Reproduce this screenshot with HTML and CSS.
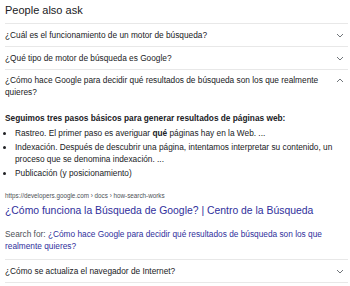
FILE: index.html
```html
<!DOCTYPE html>
<html lang="es">
<head>
<meta charset="utf-8">
<link rel="stylesheet" href="styles.css">
</head>
<body>
<div class="paa">
  <div class="title">People also ask</div>
  <div class="q">
    <span>¿Cuál es el funcionamiento de un motor de búsqueda?</span>
    <svg class="chev" viewBox="0 0 8 5" width="8" height="5"><path d="M1 1 L4 4 L7 1" fill="none" stroke="#70757a" stroke-width="1"/></svg>
  </div>
  <div class="q">
    <span>¿Qué tipo de motor de búsqueda es Google?</span>
    <svg class="chev" viewBox="0 0 8 5" width="8" height="5"><path d="M1 1 L4 4 L7 1" fill="none" stroke="#70757a" stroke-width="1"/></svg>
  </div>
  <div class="q open">
    <span>¿Cómo hace Google para decidir qué resultados de búsqueda son los que realmente quieres?</span>
    <svg class="chev up" viewBox="0 0 8 5" width="8" height="5"><path d="M1 4 L4 1 L7 4" fill="none" stroke="#70757a" stroke-width="1"/></svg>
  </div>
  <div class="answer">
    <div class="lead">Seguimos tres pasos básicos para generar resultados de páginas web:</div>
    <ul class="steps">
      <li>Rastreo. El primer paso es averiguar <b>qué</b> páginas hay en la Web. ...</li>
      <li>Indexación. Después de descubrir una página, intentamos interpretar su contenido, un proceso que se denomina indexación. ...</li>
      <li>Publicación (y posicionamiento)</li>
    </ul>
    <div class="url">https://developers.google.com › docs › how-search-works</div>
    <div class="link">¿Cómo funciona la Búsqueda de Google? | Centro de la Búsqueda</div>
    <div class="search">
      <div class="sline"><span class="slabel">Search for:</span> <a class="qlink">¿Cómo hace Google para decidir qué resultados de búsqueda son los que</a></div>
      <div class="sline"><a class="qlink">realmente quieres?</a></div>
    </div>
  </div>
  <div class="q">
    <span>¿Cómo se actualiza el navegador de Internet?</span>
    <svg class="chev" viewBox="0 0 8 5" width="8" height="5"><path d="M1 1 L4 4 L7 1" fill="none" stroke="#70757a" stroke-width="1"/></svg>
  </div>
  <div class="end"></div>
</div>
</body>
</html>
```
FILE: styles.css
```css
html, body {
  margin: 0;
  padding: 0;
  background: #ffffff;
}
body {
  font-family: Arial, "Liberation Sans", sans-serif;
  color: #202124;
}
.paa {
  padding: 0 2px 0 5px;
}
.title {
  font-size: 11px;
  height: 23px;
  line-height: 20px;
  color: #202124;
}
.q {
  border-top: 1px solid #e8e8e8;
  display: flex;
  align-items: center;
  justify-content: space-between;
  font-size: 8.3px;
  line-height: 12px;
  min-height: 22px;
  color: #202124;
}
.q.open {
  align-items: flex-start;
  padding-top: 4px;
}
.q.open span {
  max-width: 320px;
}
.q.open .chev {
  margin-top: 4px;
}
.chev {
  flex: none;
  margin-right: 4px;
}
.answer {
  padding-top: 14px;
  padding-bottom: 7px;
  font-size: 8.3px;
  line-height: 12px;
}
.lead {
  font-weight: bold;
  color: #202124;
}
.steps {
  margin: 3px 0 0;
  padding: 0 0 0 10px;
  color: #202124;
}
.steps li {
  margin-bottom: 2px;
}
.steps b {
  font-weight: bold;
}
.url {
  margin-top: 12px;
  font-size: 6.3px;
  line-height: 10px;
  color: #4d5156;
}
.link {
  font-size: 10.4px;
  line-height: 14px;
  color: #2f2f9c;
  margin-top: 3px;
}
.search {
  margin-top: 10px;
  color: #4d5156;
}
.sline {
  white-space: nowrap;
}
.qlink {
  color: #2f2f9c;
}
.end {
  border-top: 1px solid #e8e8e8;
}
```
